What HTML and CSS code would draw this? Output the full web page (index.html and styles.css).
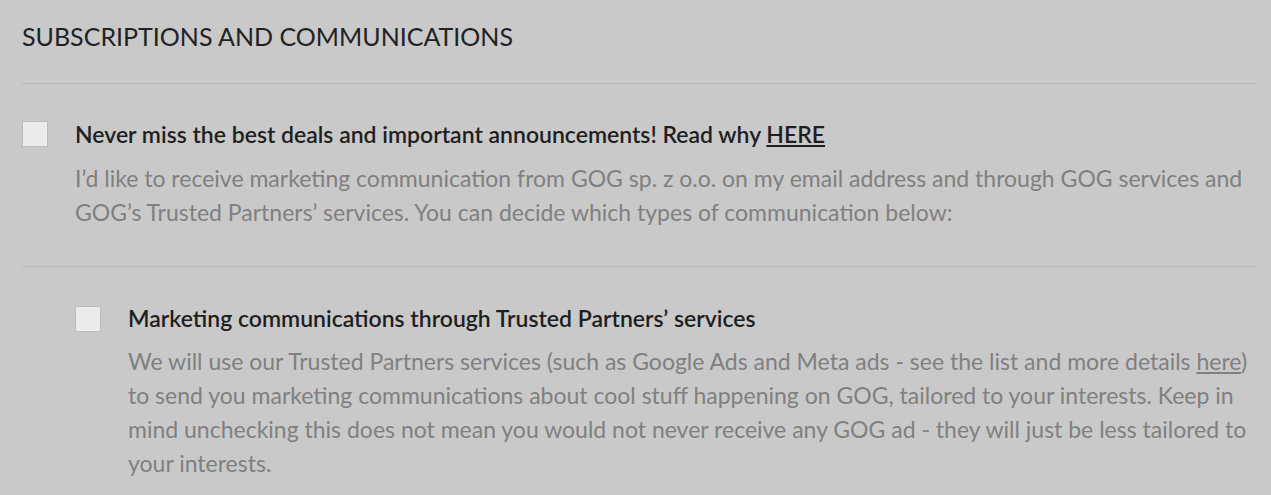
FILE: index.html
```html
<!DOCTYPE html>
<html>
<head>
<meta charset="utf-8">
<link rel="stylesheet" href="styles.css">
</head>
<body>
<section class="section">
  <h2 class="title">SUBSCRIPTIONS AND COMMUNICATIONS</h2>
  <div class="option">
    <span class="checkbox"></span>
    <div class="option-body">
      <div class="label">Never miss the best deals and important announcements! Read why <a class="link" href="#">HERE</a></div>
      <p class="desc">I’d like to receive marketing communication from GOG sp. z o.o. on my email address and through GOG services and GOG’s Trusted Partners’ services. You can decide which types of communication below:</p>
    </div>
  </div>
  <div class="option option-nested">
    <span class="checkbox"></span>
    <div class="option-body">
      <div class="label">Marketing communications through Trusted Partners’ services</div>
      <p class="desc desc-nested">We will use our Trusted Partners services (such as Google Ads and Meta ads - see the list and more details <a class="link-soft" href="#">here</a>) to send you marketing communications about cool stuff happening on GOG, tailored to your interests. Keep in mind unchecking this does not mean you would not never receive any GOG ad - they will just be less tailored to your interests.</p>
    </div>
  </div>
</section>
</body>
</html>
```
FILE: styles.css
```css
html, body {
  margin: 0;
  padding: 0;
  background: #c9c9c9;
}
body {
  font-family: Lato, "Open Sans", sans-serif;
  height: 495px;
  overflow: hidden;
}
.section {
  padding: 0 15px 0 22px;
}
.title {
  margin: 0;
  height: 84px;
  box-sizing: border-box;
  padding-top: 20px;
  font-size: 25px;
  line-height: 32px;
  font-weight: 400;
  color: #222;
  border-bottom: 1px solid #b9b9b9;
}
.option {
  display: flex;
  gap: 27px;
  padding: 33px 0 37px;
  border-bottom: 1px solid #b9b9b9;
}
.option-nested {
  padding-left: 53px;
  padding-top: 34px;
  border-bottom: none;
}
.checkbox {
  flex: none;
  width: 24px;
  height: 24px;
  margin-top: 4px;
  background: #ebebeb;
  border: 1px solid #bdbdbd;
}
.option-nested .checkbox {
  margin-top: 5px;
}
.option-body {
  flex: 1;
}
.label {
  font-size: 23px;
  line-height: 34px;
  font-weight: 600;
  color: #1f1f1f;
}
.link {
  color: #1f1f1f;
  text-decoration: underline;
}
.desc {
  margin: 10px 0 0;
  font-size: 23px;
  line-height: 34px;
  color: #808080;
}
.desc-nested {
  margin-top: 9px;
}
.link-soft {
  color: #808080;
  text-decoration: underline;
}
```
